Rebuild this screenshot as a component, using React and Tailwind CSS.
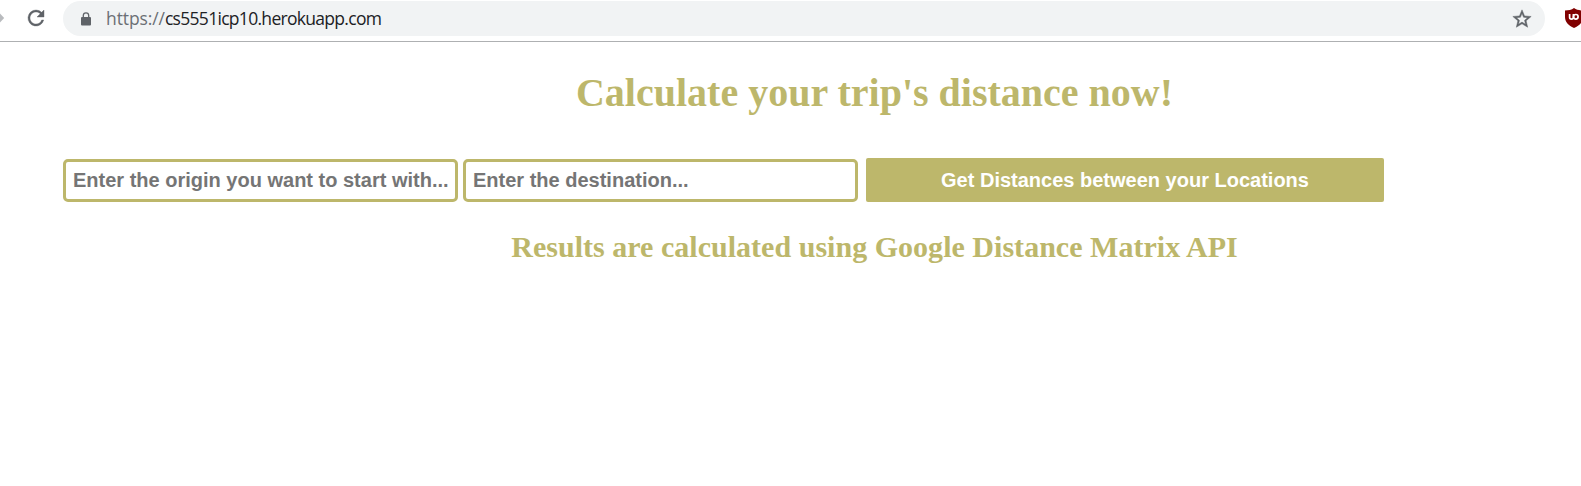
function BrowserBar() {
  return (
    <div className="flex h-[42px] w-full shrink-0 items-start overflow-hidden border-b border-[#aeb0b2] bg-white pt-px">
      <svg className="mt-[10px] h-[14px] w-[5px] shrink-0" viewBox="0 0 5 14">
        <path d="M0 2.500 L4.200 7 L0 11.500 Z" fill="#b9bbbe" />
      </svg>
      <svg className="mt-[5px] ml-[19px] size-6 shrink-0" viewBox="0 0 24 24" fill="#5f6368" stroke="#5f6368" strokeWidth="0.4">
        <path d="M17.65 6.35A7.958 7.958 0 0 0 12 4a8 8 0 1 0 7.730 10h-2.080A5.990 5.990 0 0 1 12 18c-3.310 0-6-2.690-6-6s2.690-6 6-6c1.660 0 3.140.690 4.220 1.780L13 11h7V4l-2.350 2.350z" />
      </svg>
      <div className="ml-[15px] flex h-[35px] w-[1482px] shrink-0 items-center rounded-full bg-[#f1f3f4]">
        <svg className="mt-px ml-[18px] h-[14px] w-[10px] shrink-0" viewBox="0 0 10 14">
          <path d="M2.300 6 V3.600 a2.700 2.700 0 0 1 5.400 0 V6" fill="none" stroke="#5f6368" strokeWidth="1.300" />
          <rect x="0" y="5" width="10" height="8.500" rx="1" fill="#5f6368" />
        </svg>
        <div className="ml-[15px] flex-1 font-['Open_Sans',sans-serif] text-[17.5px] leading-[35px] tracking-[-0.7px] whitespace-nowrap text-[#202124]">
          <span className="tracking-[-0.1px] text-[#6b6f74]">https://</span>cs5551icp10.herokuapp.com
        </div>
        <svg className="mt-px mr-[12px] size-[22px] shrink-0" viewBox="0 0 24 24" fill="#5f6368" stroke="#5f6368" strokeWidth="0.5">
          <path d="M22 9.240l-7.190-.620L12 2 9.190 8.630 2 9.240l5.460 4.730L5.820 21 12 17.270 18.180 21l-1.630-7.030L22 9.240zM12 15.400l-3.760 2.270 1-4.280-3.320-2.880 4.380-.380L12 6.100l1.710 4.040 4.380.380-3.320 2.880 1 4.280L12 15.400z" />
        </svg>
      </div>
      <svg className="mt-[7px] ml-5 h-[20px] w-[18px] shrink-0" viewBox="0 0 18 20">
        <path d="M9 0 C6.500 1.800 3.500 2.400 0 2.600 V9 C0 14 3.500 17.500 9 20 C14.500 17.500 18 14 18 9 V2.600 C14.500 2.400 11.500 1.800 9 0Z" fill="#800000" />
        <path d="M4.600 6 V9.200 a1.900 1.900 0 0 0 3.800 0 V6" fill="none" stroke="#fff" strokeWidth="1.700" />
        <circle cx="10.800" cy="8.800" r="2.300" fill="none" stroke="#fff" strokeWidth="1.700" />
      </svg>
    </div>
  );
}

const inputClass =
  "h-[43px] w-[395px] rounded-[5px] border-[3px] border-[#bdb76b] bg-white px-[7px] font-['Liberation_Sans',sans-serif] text-[20px] font-bold text-black outline-none placeholder:text-[#757575] placeholder:opacity-100";

export default function App() {
  return (
    <div className="flex h-[486px] w-full flex-col overflow-hidden bg-white">
      <BrowserBar />
      <main className="ml-[63px] w-[1623px] shrink-0 pt-[28px] font-['Liberation_Serif',serif] font-bold text-[#bdb76b]">
        <h1 className="text-center text-[40px] leading-[46px]">Calculate your trip's distance now!</h1>
        <form className="mt-[42px] flex items-end">
          <input className={inputClass} placeholder="Enter the origin you want to start with..." />
          <input className={inputClass + " ml-[5px]"} placeholder="Enter the destination..." />
          <button
            type="button"
            className="ml-2 h-[44px] w-[518px] rounded-[2px] bg-[#bdb76b] font-['Liberation_Sans',sans-serif] text-[20px] font-bold text-white"
          >
            Get Distances between your Locations
          </button>
        </form>
        <h2 className="mt-7 text-center text-[30px] leading-[34px] tracking-[0.025px]">
          Results are calculated using Google Distance Matrix API
        </h2>
      </main>
    </div>
  );
}
